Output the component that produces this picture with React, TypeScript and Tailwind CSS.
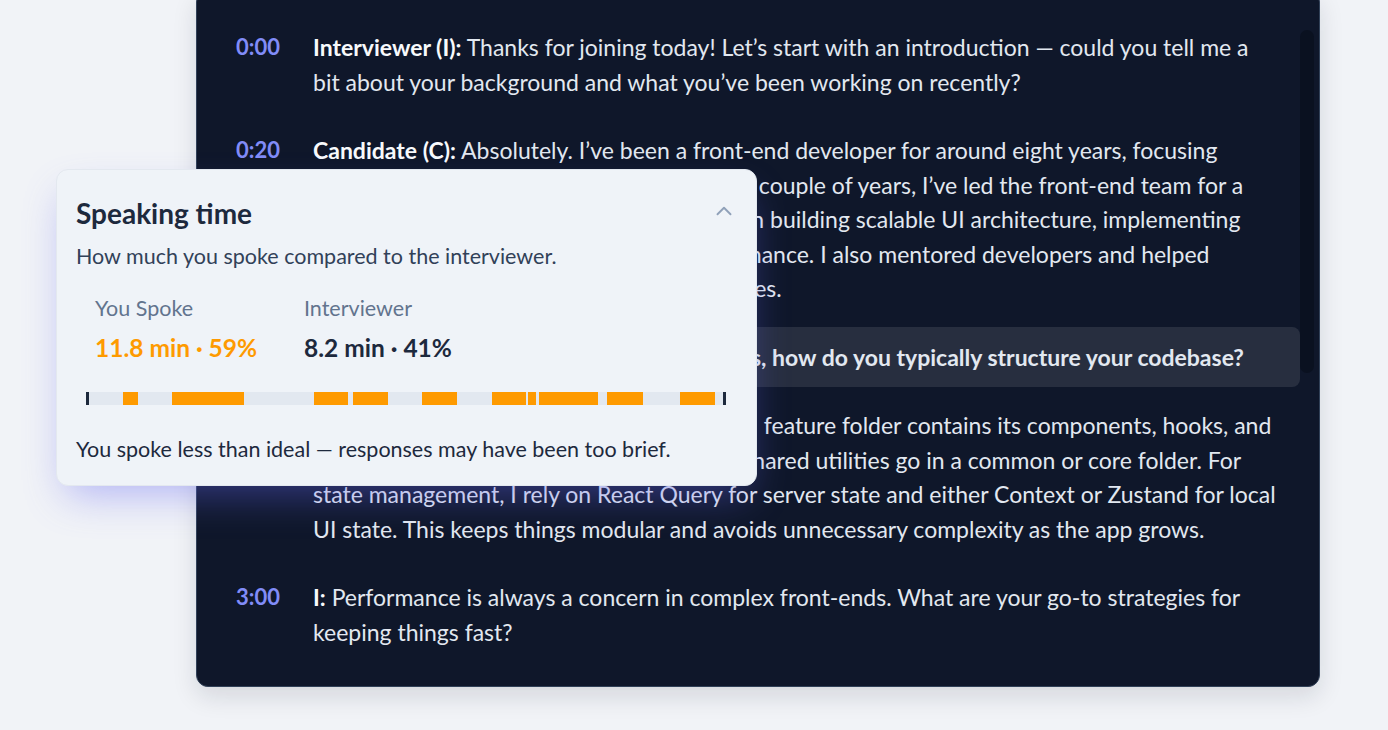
import React from 'react';
import { ChevronUp } from 'lucide-react';

type Row = {
  time: string;
  label: string;
  lines: string[];
  active?: boolean;
};

const rows: Row[] = [
  {
    time: '0:00',
    label: 'Interviewer (I):',
    lines: [
      ' Thanks for joining today! Let\u2019s start with an introduction \u2014 could you tell me a',
      'bit about your background and what you\u2019ve been working on recently?',
    ],
  },
  {
    time: '0:20',
    label: 'Candidate (C):',
    lines: [
      ' Absolutely. I\u2019ve been a front-end developer for around eight years, focusing',
      'mostly on React and TypeScript. For the last couple of years, I\u2019ve led the front-end team for a',
      'large fintech product. Our main focus was on building scalable UI architecture, implementing',
      'design systems and boosting overall performance. I also mentored developers and helped',
      'improve our code review and testing practices.',
    ],
  },
  {
    time: '0:58',
    label: 'I:',
    lines: [' When working on large React applications, how do you typically structure your codebase?'],
    active: true,
  },
  {
    time: '1:12',
    label: 'C:',
    lines: [
      ' I favor a feature-based structure, so each\u00a0 feature folder contains its components, hooks, and',
      'services and tests kept together, while the shared utilities go in a common or core folder. For',
      'state management, I rely on React Query for server state and either Context or Zustand for local',
      'UI state. This keeps things modular and avoids unnecessary complexity as the app grows.',
    ],
  },
  {
    time: '3:00',
    label: 'I:',
    lines: [
      ' Performance is always a concern in complex front-ends. What are your go-to strategies for',
      'keeping things fast?',
    ],
  },
];

// speaking segments on the timeline, px from the track start (track is 640 wide)
const segments = [
  { left: 37, width: 15 },
  { left: 86, width: 72 },
  { left: 228, width: 34 },
  { left: 267, width: 35 },
  { left: 336, width: 35 },
  { left: 406, width: 34 },
  { left: 442, width: 8 },
  { left: 453, width: 59 },
  { left: 521, width: 36 },
  { left: 594, width: 35 },
];

const TranscriptRow: React.FC<{ row: Row }> = ({ row }) => (
  <div className={`flex rounded-lg px-5 py-[13px] ${row.active ? 'bg-white/10' : ''}`}>
    <div className="w-[77px] shrink-0 text-[22px] font-bold leading-[34.5px] text-[#818cf8]">{row.time}</div>
    <p
      className={`flex-1 whitespace-nowrap text-[23px] leading-[34.5px] text-slate-200 ${
        row.active ? 'font-bold text-slate-100' : ''
      }`}
    >
      <span className="font-bold text-slate-50">{row.label}</span>
      {row.lines.map((line, i) => (
        <React.Fragment key={i}>
          {i > 0 && <br />}
          {line}
        </React.Fragment>
      ))}
    </p>
  </div>
);

const SpeakingTime: React.FC = () => (
  <div className="absolute left-[56px] top-[169px] w-[701px] rounded-xl border border-[#e3e8ef] bg-[#eff3f8] px-[19px] pb-[21px] pt-[27px] shadow-[0_18px_40px_-10px_rgba(99,102,241,0.45)]">
    <div className="flex items-center justify-between">
      <h2 className="text-[28px] font-bold leading-[32px] text-slate-800">Speaking time</h2>
      <ChevronUp size={26} strokeWidth={1.75} className="mb-1 text-slate-400" />
    </div>
    <p className="mt-3 text-[21.5px] leading-[30px] text-slate-700">How much you spoke compared to the interviewer.</p>

    <div className="mt-[23px] flex pl-[19px]">
      <div className="w-[209px]">
        <div className="text-[21.5px] leading-[28px] text-slate-500">You Spoke</div>
        <div className="mt-[11px] text-[24.5px] font-bold leading-[30px] text-amber-500">11.8 min · 59%</div>
      </div>
      <div>
        <div className="text-[21.5px] leading-[28px] text-slate-500">Interviewer</div>
        <div className="mt-[11px] text-[24.5px] font-bold leading-[30px] text-slate-800">8.2 min · 41%</div>
      </div>
    </div>

    <div className="relative mx-[10px] mt-[29px] h-[13px] w-[640px] bg-slate-200">
      <div className="absolute left-0 top-0 h-full w-[3px] bg-slate-800" />
      {segments.map((s, i) => (
        <div key={i} className="absolute top-0 h-full bg-amber-500" style={{ left: s.left, width: s.width }} />
      ))}
      <div className="absolute right-0 top-0 h-full w-[3px] bg-slate-800" />
    </div>

    <p className="mt-[29px] text-[21.5px] leading-[30px] text-slate-800">
      You spoke less than ideal — responses may have been too brief.
    </p>
  </div>
);

export default function App() {
  return (
    <div
      className="relative h-[730px] w-full overflow-hidden bg-[#f1f3f7]"
      style={{ fontFamily: 'Lato, "Noto Sans", sans-serif' }}
    >
      <div className="ml-[196px] mt-[-10px] w-[1124px] rounded-xl border border-slate-700 bg-[#0f172a] shadow-[0_10px_24px_rgba(15,23,42,0.12)]">
        <div className="flex items-start pb-[24px] pl-[19px] pr-[5px] pt-[26px]">
          <div className="flex flex-1 flex-col gap-2">
            {rows.map((row, i) => (
              <TranscriptRow key={i} row={row} />
            ))}
          </div>
          <div className="mt-[13px] h-[343px] w-[14px] rounded-full bg-[#0a1120]" />
        </div>
      </div>
      <SpeakingTime />
    </div>
  );
}
